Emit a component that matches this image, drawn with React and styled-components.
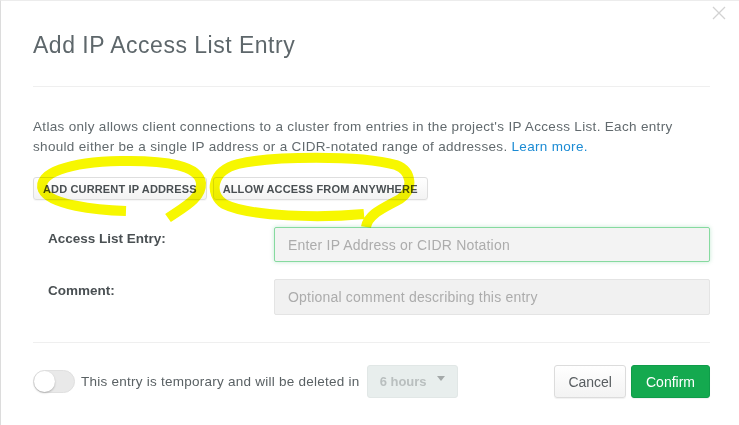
import React, { useState } from "react";
import styled, { createGlobalStyle } from "styled-components";

const GlobalStyle = createGlobalStyle`
  html, body {
    margin: 0;
    padding: 0;
    background: #ffffff;
    overflow: hidden;
  }
  body {
    font-family: "Liberation Sans", Arial, sans-serif;
  }
`;

const Page = styled.div`
  position: relative;
  width: 739px;
  height: 425px;
  overflow: hidden;
`;

const Modal = styled.section`
  position: relative;
  box-sizing: border-box;
  width: 740px;
  height: 425px;
  padding: 0 30px 0 32px;
  border-left: 1px solid #dcdcdc;
  border-top: 1px solid #ececec;
  background: #fff;
`;

const Close = styled.button`
  position: absolute;
  top: 5px;
  right: 14px;
  width: 14px;
  height: 14px;
  padding: 0;
  border: none;
  background: none;
  cursor: pointer;
  svg {
    display: block;
  }
`;

const Title = styled.h2`
  margin: 0;
  padding-top: 31px;
  font-size: 23px;
  line-height: 26px;
  font-weight: 400;
  letter-spacing: 0.5px;
  color: #5e676b;
`;

const Divider = styled.hr`
  margin: ${(p) => p.$top || 0}px 0 0;
  border: none;
  border-top: 1px solid #efefef;
`;

const Intro = styled.p`
  margin: 30px 0 0;
  font-size: 13.5px;
  line-height: 20px;
  letter-spacing: 0.32px;
  color: #626a6e;
  a {
    color: #1b8bd4;
    text-decoration: none;
  }
`;

const QuickActions = styled.div`
  display: flex;
  gap: 6px;
  margin-top: 20px;
`;

const QuickButton = styled.button`
  height: 23px;
  padding: 0 9px;
  border: 1px solid #dedede;
  border-radius: 3px;
  background: linear-gradient(#ffffff, #f3f3f3);
  box-shadow: 0 1px 1px rgba(0, 0, 0, 0.04);
  font-family: inherit;
  font-size: 11px;
  font-weight: 700;
  letter-spacing: 0.15px;
  text-transform: uppercase;
  color: #494f52;
  cursor: pointer;
`;

const Form = styled.div`
  display: flex;
  flex-direction: column;
  gap: 17px;
  margin-top: 27px;
`;

const Row = styled.label`
  display: grid;
  grid-template-columns: 241px 1fr;
  align-items: start;
`;

const Label = styled.span`
  padding: 4px 0 0 15px;
  font-size: 13.5px;
  line-height: 16px;
  font-weight: 700;
  color: #4a5053;
`;

const Input = styled.input`
  box-sizing: border-box;
  width: 100%;
  height: ${(p) => (p.$active ? 35 : 36)}px;
  padding: 0 13px;
  border: 1px solid ${(p) => (p.$active ? "#86da9f" : "#e4e4e4")};
  border-radius: 2px;
  background: ${(p) => (p.$active ? "#f3f3f3" : "#f1f1f1")};
  box-shadow: ${(p) => (p.$active ? "0 0 4px rgba(19, 170, 82, 0.25)" : "none")};
  font-family: inherit;
  font-size: 14px;
  letter-spacing: 0.2px;
  color: #444;
  outline: none;
  &::placeholder {
    color: #acacac;
  }
`;

const Footer = styled.div`
  display: flex;
  align-items: center;
  justify-content: space-between;
  margin-top: 22px;
`;

const Group = styled.div`
  display: flex;
  align-items: center;
  gap: ${(p) => p.$gap || 0}px;
`;

const Toggle = styled.button`
  position: relative;
  box-sizing: border-box;
  width: 42px;
  height: 23px;
  margin-right: 6px;
  padding: 0;
  border: 1px solid #e0e0e0;
  border-radius: 12px;
  background: #e9e9e9;
  cursor: pointer;
  &::after {
    content: "";
    position: absolute;
    top: 0;
    left: ${(p) => (p.$on ? 19 : 0)}px;
    width: 21px;
    height: 21px;
    border-radius: 50%;
    background: #fff;
    box-shadow: 0 1px 2px rgba(0, 0, 0, 0.25);
  }
`;

const FooterText = styled.span`
  margin-right: 7px;
  font-size: 13.5px;
  letter-spacing: 0.25px;
  color: #5a6164;
`;

const Select = styled.div`
  box-sizing: border-box;
  display: flex;
  align-items: center;
  justify-content: space-between;
  width: 91px;
  height: 33px;
  padding: 0 12px;
  border: 1px solid #e1e7e6;
  border-radius: 3px;
  background: #e8eeed;
  font-size: 13px;
  font-weight: 700;
  color: #b9bfbf;
  &::after {
    content: "";
    border-left: 4px solid transparent;
    border-right: 4px solid transparent;
    border-top: 5px solid #a4a9a9;
    margin-top: -6px;
  }
`;

const ActionButton = styled.button`
  box-sizing: border-box;
  height: 33px;
  padding: 0 ${(p) => (p.$primary ? 14 : 13)}px;
  border: 1px solid ${(p) => (p.$primary ? "#0f9c4a" : "#dcdcdc")};
  border-radius: 3px;
  background: ${(p) =>
    p.$primary ? "#14a94f" : "linear-gradient(#ffffff, #f3f3f3)"};
  box-shadow: 0 1px 1px rgba(0, 0, 0, 0.06);
  font-family: inherit;
  font-size: 14px;
  color: ${(p) => (p.$primary ? "#ffffff" : "#585d60")};
  cursor: pointer;
`;

const Highlighter = styled.svg`
  position: absolute;
  top: 0;
  left: 0;
  pointer-events: none;
  mix-blend-mode: multiply;
`;

const App = () => {
  const [temporary, setTemporary] = useState(false);
  const [entry, setEntry] = useState({ ip: "", comment: "" });

  const handleChange = (e) => {
    setEntry({ ...entry, [e.target.name]: e.target.value });
  };

  return (
    <Page>
      <GlobalStyle />
      <Modal>
        <Close aria-label="Close">
          <svg width="14" height="14" viewBox="0 0 14 14">
            <path d="M1 1 L13 13 M13 1 L1 13" stroke="#d2d2d2" strokeWidth="1.3" />
          </svg>
        </Close>
        <Title>Add IP Access List Entry</Title>
        <Divider $top={28} />
        <Intro>
          Atlas only allows client connections to a cluster from entries in the project's IP
          Access List. Each entry should either be a single IP address or a CIDR-notated range
          of addresses. <a href="#">Learn more.</a>
        </Intro>
        <QuickActions>
          <QuickButton>Add current IP address</QuickButton>
          <QuickButton>Allow access from anywhere</QuickButton>
        </QuickActions>
        <Form>
          <Row>
            <Label>Access List Entry:</Label>
            <Input
              $active
              name="ip"
              value={entry.ip}
              onChange={handleChange}
              placeholder="Enter IP Address or CIDR Notation"
            />
          </Row>
          <Row>
            <Label>Comment:</Label>
            <Input
              name="comment"
              value={entry.comment}
              onChange={handleChange}
              placeholder="Optional comment describing this entry"
            />
          </Row>
        </Form>
        <Divider $top={27} />
        <Footer>
          <Group>
            <Toggle $on={temporary} onClick={() => setTemporary(!temporary)} />
            <FooterText>This entry is temporary and will be deleted in</FooterText>
            <Select>6 hours</Select>
          </Group>
          <Group $gap={5}>
            <ActionButton>Cancel</ActionButton>
            <ActionButton $primary>Confirm</ActionButton>
          </Group>
        </Footer>
      </Modal>
      {/* marker scribbles from the screenshot */}
      <Highlighter width="739" height="425" viewBox="0 0 739 425">
        <g fill="none" stroke="#f7f700" strokeWidth="10" strokeLinecap="butt">
          <path d="M126 211 C96 210 50 205 43 190 C36 173 70 162 120 161 C168 160 199 166 201 183 C202 198 184 207 168 218" />
          <path d="M366 227 C368 214 384 208 400 199 C414 189 412 171 396 165 C360 155 272 156 238 164 C211 171 209 194 224 204 C250 217 322 218 364 214" />
        </g>
      </Highlighter>
    </Page>
  );
};

export default App;
